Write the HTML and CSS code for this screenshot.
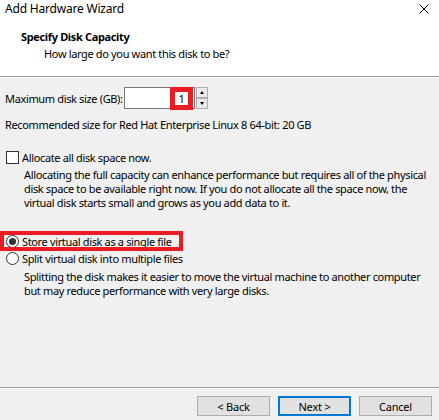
FILE: index.html
```html
<!DOCTYPE html>
<html lang="en">
<head>
    <meta charset="UTF-8">
    <meta name="viewport" content="width=device-width, initial-scale=1.0">
    <title>Add Hardware Wizard</title>
    <link rel="stylesheet" href="styles.css">
</head>
<body>
    <div class="window">
        <div class="titlebar">
            <span class="title">Add Hardware Wizard</span>
            <svg class="close" width="10" height="10" viewBox="0 0 10 10">
                <path d="M0.5 0.5 L9.5 9.5 M9.5 0.5 L0.5 9.5" stroke="#000" stroke-width="1" fill="none"/>
            </svg>
        </div>
        <div class="header">
            <h1>Specify Disk Capacity</h1>
            <p>How large do you want this disk to be?</p>
        </div>

        <div class="content">
            <div class="size-row">
                <label>Maximum disk size (GB):</label>
                <div class="num-field">
                    <span class="num-value">1</span>
                </div>
                <div class="spinner">
                    <button class="spin spin-up"></button>
                    <button class="spin spin-down"></button>
                </div>
            </div>
            <p class="recommend">Recommended size for Red Hat Enterprise Linux 8 64-bit: 20 GB</p>

            <div class="option allocate">
                <span class="checkbox"></span>
                <span>Allocate all disk space now.</span>
            </div>
            <p class="note">Allocating the full capacity can enhance performance but requires all of the physical<br>disk space to be available right now. If you do not allocate all the space now, the<br>virtual disk starts small and grows as you add data to it.</p>

            <div class="option single-file">
                <span class="radio checked"></span>
                <span>Store virtual disk as a single file</span>
            </div>
            <div class="option split-files">
                <span class="radio"></span>
                <span>Split virtual disk into multiple files</span>
            </div>
            <p class="note note-split">Splitting the disk makes it easier to move the virtual machine to another computer<br>but may reduce performance with very large disks.</p>
        </div>

        <div class="footer">
            <button class="btn">&lt; Back</button>
            <button class="btn btn-default">Next &gt;</button>
            <button class="btn">Cancel</button>
        </div>
    </div>
</body>
</html>
```

FILE: styles.css
```css
body {
    margin: 0;
    background-color: #f0f0f0;
    font-family: 'Noto Sans', sans-serif;
    font-size: 11px;
    letter-spacing: -0.35px;
    color: #000000;
}
.window {
    display: flex;
    flex-direction: column;
    height: 420px;
    overflow: hidden;
}
.titlebar {
    display: flex;
    align-items: center;
    justify-content: space-between;
    height: 17px;
    padding: 0 10px 0 5px;
    background: #ffffff;
}
.title {
    font-size: 12px;
    letter-spacing: -0.2px;
}
.close {
    margin-top: 1px;
}
.header {
    background: #ffffff;
    height: 59px;
    border-bottom: 1px solid #a0a0a0;
}
.header h1 {
    margin: 0;
    padding: 13px 0 0 21px;
    font-size: 11px;
    font-weight: bold;
    line-height: 14px;
}
.header p {
    margin: 3px 0 0 44px;
    line-height: 13px;
}
.content {
    flex: 1;
    border-top: 1px solid #ffffff;
}
.size-row {
    display: flex;
    align-items: center;
    margin-top: 9px;
    padding-left: 5px;
    height: 22px;
}
.size-row label {
    width: 119px;
    flex-shrink: 0;
    white-space: nowrap;
}
.num-field {
    display: flex;
    align-items: center;
    justify-content: flex-end;
    box-sizing: border-box;
    width: 71px;
    height: 22px;
    border: 1px solid #7a7a7a;
    background: #ffffff;
}
.num-value {
    width: 13px;
    height: 13px;
    line-height: 13px;
    text-align: center;
    margin-right: 6px;
    outline: 5px solid #ed1c24;
    background: #ffffff;
}
.spinner {
    display: flex;
    flex-direction: column;
    margin-left: 1px;
}
.spin {
    box-sizing: border-box;
    width: 12px;
    height: 11px;
    padding: 0;
    border: 1px solid #adadad;
    background: #e9e9e9;
    position: relative;
}
.spin::after {
    content: '';
    position: absolute;
    left: 3px;
    top: 3px;
    border-left: 2.5px solid transparent;
    border-right: 2.5px solid transparent;
}
.spin-up::after {
    border-bottom: 3px solid #000000;
}
.spin-down::after {
    border-top: 3px solid #000000;
}
.recommend {
    margin: 9px 0 0 5px;
    line-height: 13px;
}
.option {
    display: flex;
    align-items: center;
    gap: 3px;
    padding-left: 6px;
    height: 16px;
    line-height: 13px;
    white-space: nowrap;
}
.allocate {
    margin-top: 18px;
}
.checkbox {
    box-sizing: border-box;
    width: 13px;
    height: 13px;
    border: 1px solid #333333;
    background: #ffffff;
}
.note {
    margin: 3px 0 0 24px;
    line-height: 14px;
    white-space: nowrap;
}
.single-file {
    box-sizing: border-box;
    margin: 25px 0 0 4px;
    padding-left: 2px;
    width: 175px;
    height: 12px;
    outline: 4px solid #ed1c24;
}
.split-files {
    margin-top: 3px;
}
.note-split {
    margin-top: 4px;
}
.radio {
    box-sizing: border-box;
    flex-shrink: 0;
    width: 13px;
    height: 13px;
    border: 1px solid #333333;
    border-radius: 50%;
    background: #ffffff;
    display: flex;
    align-items: center;
    justify-content: center;
}
.radio.checked::after {
    content: '';
    width: 7px;
    height: 7px;
    border-radius: 50%;
    background: #333333;
}
.footer {
    display: flex;
    justify-content: flex-end;
    gap: 8px;
    height: 33px;
    padding: 8px 7px 0 0;
    box-sizing: border-box;
    border-top: 1px solid #a0a0a0;
    box-shadow: inset 0 1px 0 #ffffff;
}
.btn {
    box-sizing: border-box;
    width: 73px;
    height: 20px;
    padding: 0;
    font-family: inherit;
    font-size: 11px;
    letter-spacing: -0.2px;
    border: 1px solid #adadad;
    background: #e1e1e1;
    color: #000000;
}
.btn-default {
    border: 2px solid #0078d7;
}
```
